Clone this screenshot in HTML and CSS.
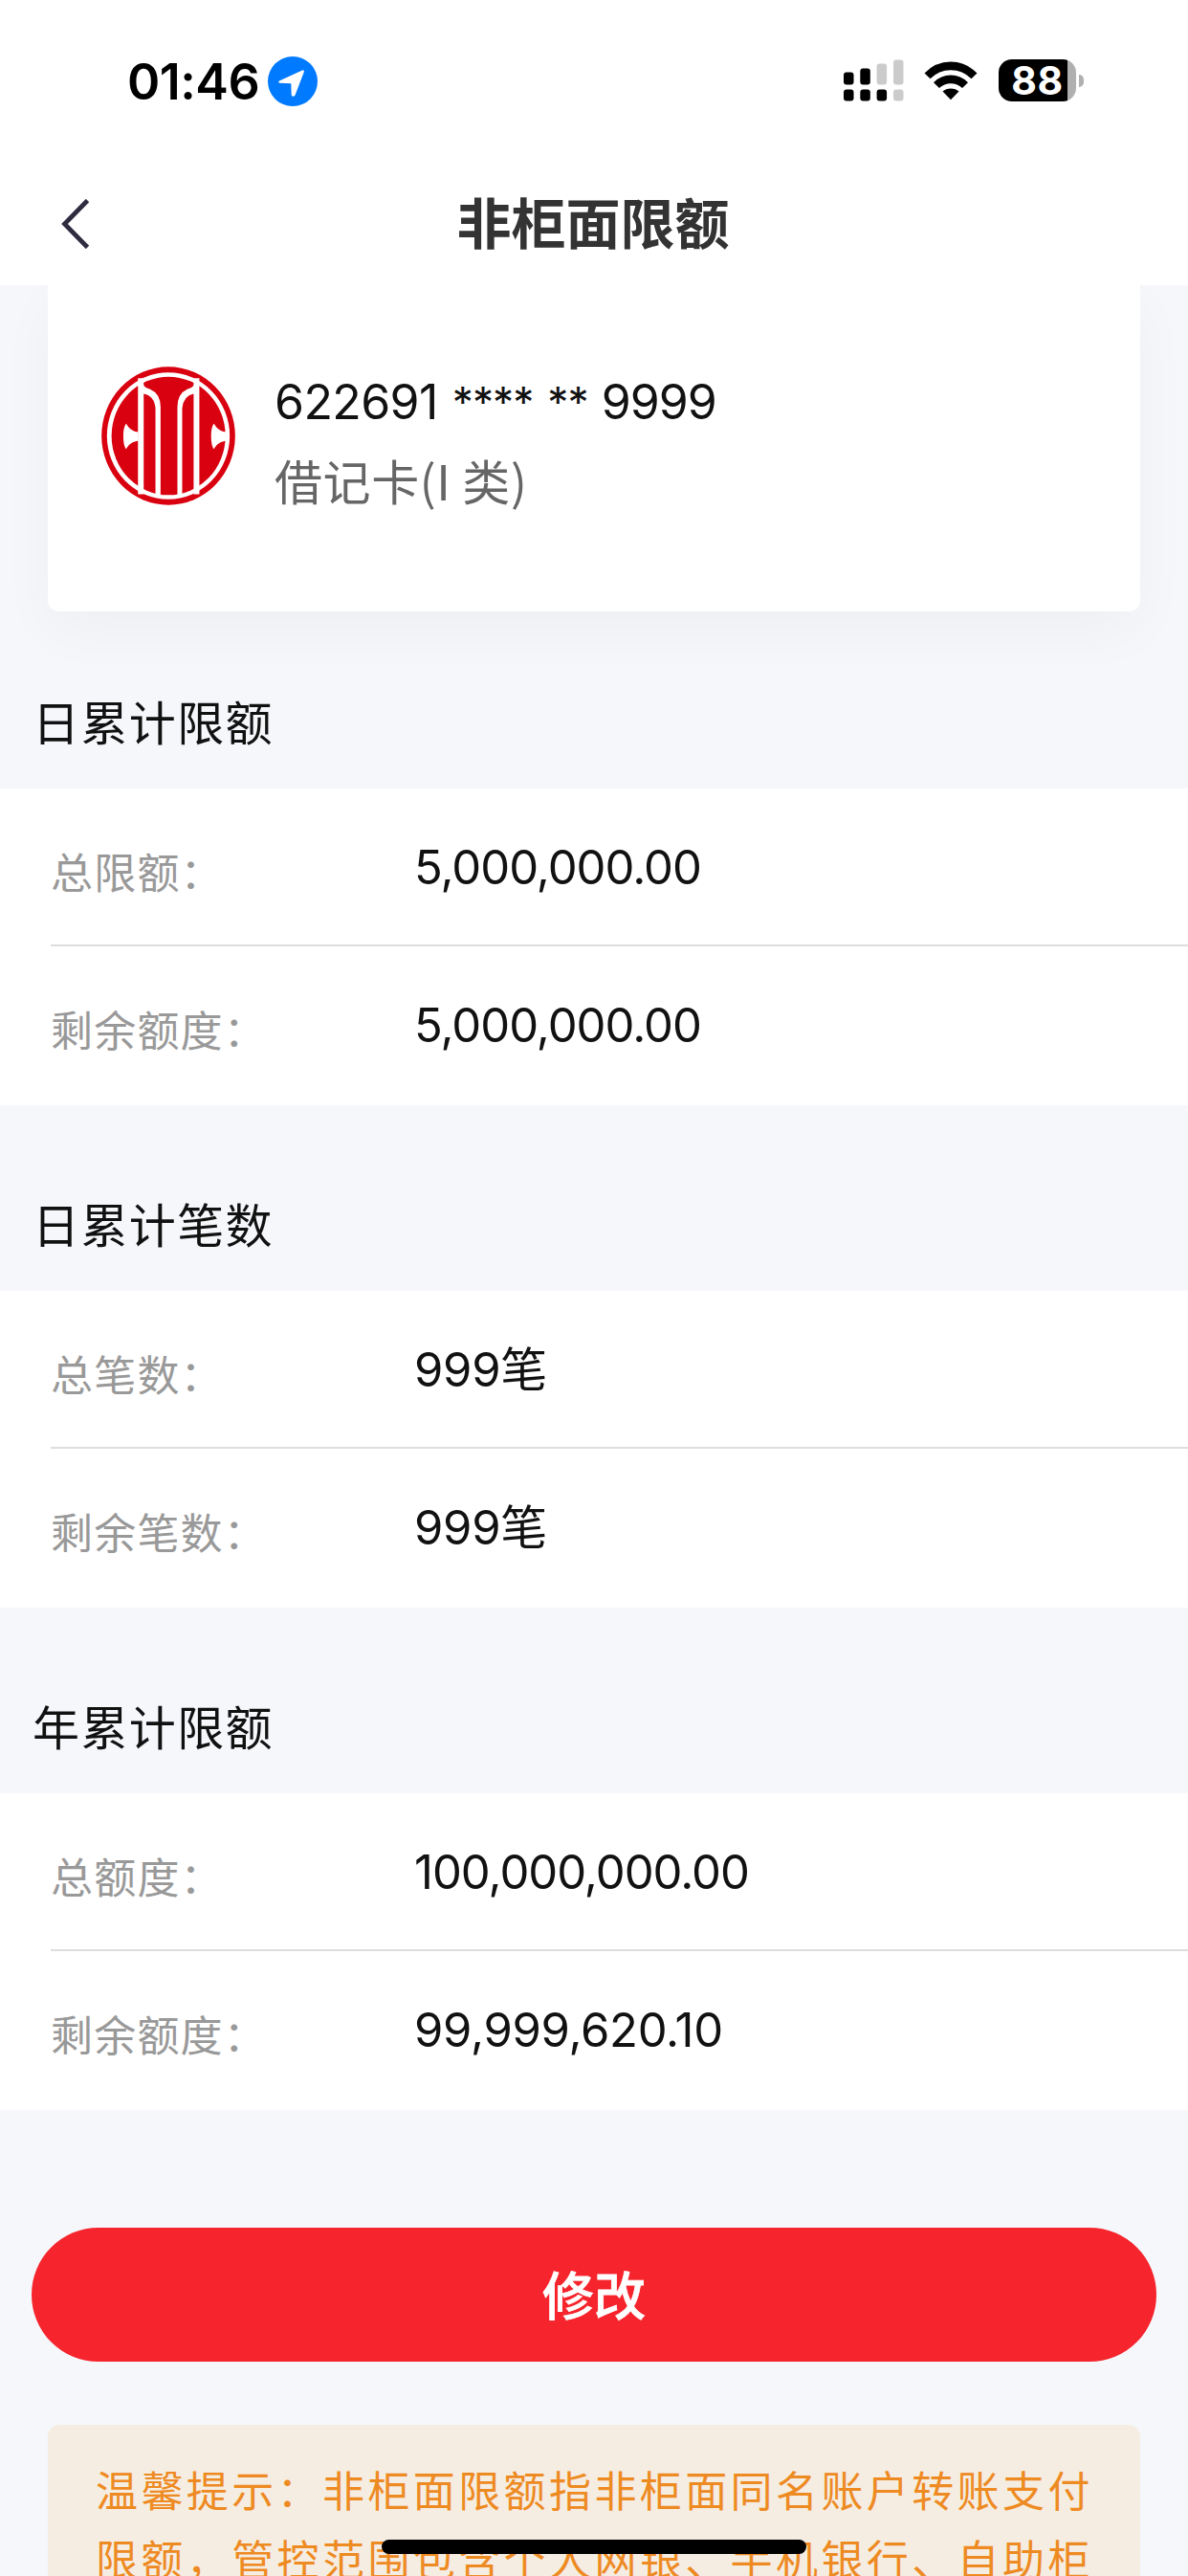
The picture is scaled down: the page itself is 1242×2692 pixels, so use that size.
FILE: index.html
```html
<!DOCTYPE html>
<html lang="zh-CN">
<head>
  <meta charset="UTF-8" />
  <meta name="viewport" content="width=device-width, initial-scale=1.0" />
  <title>非柜面限额</title>
  <link rel="stylesheet" href="styles.css">
</head>
<body>
  <div class="status-bar">
    <span class="time">01:46</span>
    <svg class="location" viewBox="0 0 52 52">
      <circle cx="26" cy="26" r="26" fill="#007aff" />
      <path d="M12 25.5 L36 14.5 Q38.3 13.8 37.8 16.2 L28.5 40.5 Q26.5 43 24.7 40.5 L24.3 28.2 L12.3 27.8 Q10.2 26.8 12 25.5Z" fill="#fff" />
    </svg>
    <svg class="signal" viewBox="0 0 64 44">
      <g fill="#000">
        <rect x="0" y="13.5" width="10.5" height="13" rx="3" />
        <rect x="17.3" y="9.5" width="10.5" height="17" rx="3" />
        <rect x="0" y="31.5" width="10.5" height="12" rx="3" />
        <rect x="17.3" y="31.5" width="10.5" height="12" rx="3" />
        <rect x="34.6" y="31.5" width="10.5" height="12" rx="3" />
      </g>
      <g fill="#cbcbcb">
        <rect x="34.6" y="4.5" width="10.5" height="22" rx="3" />
        <rect x="52" y="0.5" width="10.5" height="26" rx="3" />
        <rect x="52" y="31.5" width="10.5" height="12" rx="3" />
      </g>
    </svg>
    <svg class="wifi" viewBox="0 0 56 41">
      <path d="M0.5 12.5 Q12 0.5 28 0.5 T55.5 12.5 L49.5 18.3 Q40.5 9.2 28 9.2 T6.5 18.3Z" />
      <path d="M10 22.3 Q17.5 14.6 28 14.6 T46 22.3 L40 28 Q35 23.2 28 23.2 T16 28Z" />
      <path d="M19.5 31.6 Q23 28.5 28 28.5 T36.5 31.6 L28 40.3Z" />
    </svg>
    <div class="battery">
      <div class="battery-body">88</div>
      <div class="battery-tip"></div>
    </div>
  </div>

  <div class="nav">
    <svg class="back" viewBox="0 0 30 52">
      <path d="M27.5 1.5 L3.5 26 L27.5 50.5" fill="none" stroke="#2f2c40" stroke-width="4.8" />
    </svg>
    <h1>非柜面限额</h1>
  </div>

  <div class="content">
    <div class="card">
      <svg class="logo" viewBox="48 39 421 435">
        <ellipse cx="258.5" cy="256.5" rx="210" ry="217" fill="#d9000f" />
        <ellipse cx="258.5" cy="256.5" rx="193" ry="199" fill="#fff" />
        <ellipse cx="259" cy="256.5" rx="179" ry="186" fill="#d9000f" />
        <g fill="#fff">
          <path d="M163 75 H181 V96 Q184 105 200 109 Q234 124 234 165 V445 H218 V170 Q215 131 181 124 V440 H163Z" />
          <path d="M356 75 H338 V96 Q335 105 319 109 Q287 124 287 165 V445 H302 V170 Q305 131 338 124 V440 H356Z" />
          <path d="M164 244 C148 243 136 235 126 218 C119 226 117 242 117 257 C117 275 120 291 126 298 C135 280 150 273 164 272Z" />
          <path d="M441 244 C424 243 412 235 402 218 C395 226 393 242 393 257 C393 275 396 291 402 298 C411 280 426 273 441 272Z" />
        </g>
      </svg>
      <div class="card-info">
        <div class="card-no"><span>622691</span><span class="stars">****</span><span class="stars">**</span><span>9999</span></div>
        <div class="card-type">借记卡(I 类)</div>
      </div>
    </div>

    <h2>日累计限额</h2>
    <div class="group">
      <div class="row"><span class="label">总限额：</span><span class="value">5,000,000.00</span></div>
      <div class="row"><span class="label">剩余额度：</span><span class="value">5,000,000.00</span></div>
    </div>

    <h2>日累计笔数</h2>
    <div class="group">
      <div class="row"><span class="label">总笔数：</span><span class="value wide">999笔</span></div>
      <div class="row"><span class="label">剩余笔数：</span><span class="value wide">999笔</span></div>
    </div>

    <h2>年累计限额</h2>
    <div class="group">
      <div class="row"><span class="label">总额度：</span><span class="value">100,000,000.00</span></div>
      <div class="row"><span class="label">剩余额度：</span><span class="value wide">99,999,620.10</span></div>
    </div>

    <button class="submit">修改</button>

    <div class="tips">温馨提示：非柜面限额指非柜面同名账户转账支付限额，管控范围包含个人网银、手机银行、自助柜</div>
  </div>

  <div class="home-bar"></div>
</body>
</html>
```
FILE: styles.css
```css
* {
  box-sizing: border-box;
}
body {
  margin: 0;
  width: 1242px;
  height: 2692px;
  overflow: hidden;
  display: flex;
  flex-direction: column;
  background-color: #f5f7fb;
  font-family: "Noto Sans CJK SC", sans-serif;
  color: #111;
}
h1, h2 {
  margin: 0;
}

/* status bar */
.status-bar {
  display: flex;
  flex-shrink: 0;
  align-items: center;
  height: 168px;
  padding: 0 109px 0 133px;
  background-color: #fff;
}
.time {
  width: 147px;
  margin-top: 3px;
  font: 600 52px/60px Inter, sans-serif;
  letter-spacing: -0.5px;
  color: #000;
  white-space: nowrap;
}
.location {
  width: 52px;
  height: 52px;
  margin-top: 2px;
}
.signal {
  width: 64px;
  height: 44px;
  margin-left: auto;
}
.wifi {
  width: 56px;
  height: 41px;
  margin-left: 20px;
}
.battery {
  display: flex;
  align-items: center;
  gap: 3px;
  margin-left: 22px;
}
.battery-body {
  width: 81px;
  height: 44px;
  border-radius: 14px;
  background: linear-gradient(to right, #000 72px, #b0b0b0 72px);
  color: #fff;
  font: 700 41px/44px Inter, sans-serif;
  letter-spacing: 0.5px;
  text-align: center;
}
.battery-tip {
  width: 5px;
  height: 13px;
  border-radius: 0 6px 6px 0;
  background-color: #b0b0b0;
}

/* title */
.nav {
  display: grid;
  grid-template-columns: 64px 1fr 64px;
  flex-shrink: 0;
  align-items: center;
  height: 130px;
  background-color: #fff;
  z-index: 1;
}
.back {
  width: 30px;
  height: 52px;
  margin: 2px 0 0 64px;
}
.nav h1 {
  padding: 0 2px 6px 0;
  font-size: 57px;
  line-height: 80px;
  font-weight: 700;
  text-align: center;
  color: #333;
}

.content {
  display: flex;
  flex-direction: column;
}
.card {
  display: flex;
  height: 341px;
  margin: 0 50px;
  padding: 85px 56px 0;
  background-color: #fff;
  border-radius: 0 0 12px 12px;
  box-shadow: 0 20px 60px rgba(0, 0, 0, 0.035);
}
.logo {
  width: 140px;
  height: 145px;
}
.card-info {
  margin-left: 41px;
}
.card-no {
  display: flex;
  margin-top: 4px;
  font: 400 50px/66px Inter, sans-serif;
  letter-spacing: -0.6px;
}
.stars {
  margin-left: 15px;
  font-size: 44px;
  letter-spacing: -0.9px;
}
.card-no span:last-child {
  margin-left: 14px;
  letter-spacing: -1px;
}
.card-type {
  margin-top: 12px;
  font-size: 50px;
  line-height: 72px;
  letter-spacing: 0.6px;
  color: #666;
}

h2 {
  height: 194px;
  padding: 86px 0 0 34px;
  font-size: 49px;
  line-height: 74px;
  font-weight: 400;
  letter-spacing: 1.4px;
}
.card + h2 {
  height: 185px;
  padding-top: 77px;
}
.group {
  height: 331px;
  padding-left: 53px;
  background-color: #fff;
}
.row {
  display: flex;
  align-items: center;
  height: 163px;
}
.row + .row {
  height: 168px;
  border-top: 2px solid #dedede;
}
.label {
  width: 380px;
  padding-top: 9px;
  font-size: 44px;
  line-height: 64px;
  letter-spacing: 1.2px;
  color: #999;
}
.value {
  padding-top: 3px;
  font: 400 49px/64px Inter, "Noto Sans CJK SC", sans-serif;
  letter-spacing: -1px;
}
.row + .row .label {
  padding-top: 6px;
}
.row + .row .value {
  padding-top: 0;
}
.value.wide {
  letter-spacing: -0.3px;
}

.submit {
  height: 140px;
  margin: 123px 33px 0;
  padding: 0 0 3px;
  border: none;
  border-radius: 70px;
  background-color: #f6242c;
  color: #fff;
  font: 500 54px/80px "Noto Sans CJK SC", sans-serif;
  -webkit-text-stroke: 0.8px #fff;
}
.tips {
  height: 200px;
  margin: 66px 50px 0;
  padding: 31px 40px 0 50px;
  border-radius: 12px;
  background-color: #f5ede2;
  color: #ee8a22;
  font-size: 44px;
  line-height: 72px;
  letter-spacing: 3.4px;
  word-break: break-all;
}

/* sits over the page, like the system draws it */
.home-bar {
  position: absolute;
  left: 399px;
  top: 2654px;
  width: 444px;
  height: 15px;
  border-radius: 8px;
  background-color: #000;
}
```
